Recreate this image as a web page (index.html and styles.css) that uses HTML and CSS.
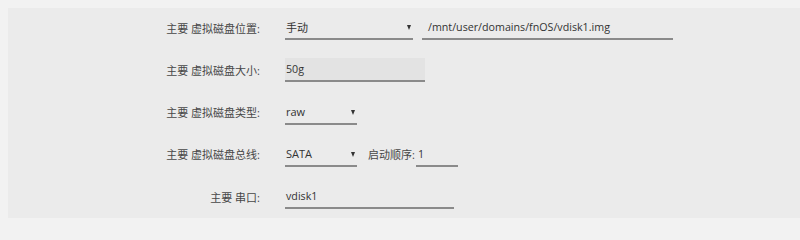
FILE: index.html
```html
<!DOCTYPE html>
<html lang="zh">
<head>
<meta charset="utf-8">
<link rel="stylesheet" href="styles.css">
</head>
<body>
<div class="panel">
  <div class="row">
    <div class="label">主要 虚拟磁盘位置:</div>
    <div class="fields">
      <div class="select w-loc"><span>手动</span><i class="arrow"></i></div>
      <div class="input w-path"><span>/mnt/user/domains/fnOS/vdisk1.img</span></div>
    </div>
  </div>
  <div class="row">
    <div class="label">主要 虚拟磁盘大小:</div>
    <div class="fields">
      <div class="input filled w-size"><span>50g</span></div>
    </div>
  </div>
  <div class="row">
    <div class="label">主要 虚拟磁盘类型:</div>
    <div class="fields">
      <div class="select w-short"><span>raw</span><i class="arrow"></i></div>
    </div>
  </div>
  <div class="row">
    <div class="label">主要 虚拟磁盘总线:</div>
    <div class="fields">
      <div class="select w-short"><span>SATA</span><i class="arrow"></i></div>
      <div class="inline-label">启动顺序:</div>
      <div class="input w-boot"><span>1</span></div>
    </div>
  </div>
  <div class="row">
    <div class="label">主要 串口:</div>
    <div class="fields">
      <div class="input w-serial"><span>vdisk1</span></div>
    </div>
  </div>
</div>
</body>
</html>
```
FILE: styles.css
```css
html, body {
  margin: 0;
  padding: 0;
}
body {
  background: #f2f2f2;
  font-family: "Open Sans", "Noto Sans CJK SC", sans-serif;
  font-size: 11px;
  color: #383838;
  padding: 8px 0 0 8px;
  height: 222px;
  box-sizing: border-box;
  overflow: hidden;
}
.panel {
  background: #ebebeb;
  height: 210px;
  box-sizing: border-box;
  padding-top: 8px;
  display: flex;
  flex-direction: column;
  gap: 18.25px;
}
.row {
  display: flex;
  align-items: center;
  height: 24px;
}
.label {
  width: 252px;
  text-align: right;
  color: #474747;
  flex: none;
  padding-bottom: 1px;
}
.fields {
  margin-left: 25px;
  display: flex;
  align-items: center;
  height: 24px;
}
.select, .input {
  height: 24px;
  box-sizing: border-box;
  border-bottom: 2px solid #8a8a8a;
  display: flex;
  align-items: center;
  padding-left: 1px;
  position: relative;
  color: #333;
  font-size: 10.7px;
}
.select span:first-child {
  font-size: 11px;
}
.filled {
  background: #e3e3e3;
}
.arrow {
  position: absolute;
  right: 2px;
  top: 9px;
  width: 0;
  height: 0;
  border-left: 2.5px solid transparent;
  border-right: 2.5px solid transparent;
  border-top: 5px solid #333;
}
.w-loc { width: 128px; }
.w-path { width: 251px; margin-left: 9px; padding-left: 6px; }
.w-size { width: 140px; }
.w-short { width: 72px; }
.w-boot { width: 42px; margin-left: 1px; padding-left: 2px; }
.w-serial { width: 169px; }
.inline-label {
  margin-left: 11px;
  color: #474747;
  padding-bottom: 1px;
}
```
